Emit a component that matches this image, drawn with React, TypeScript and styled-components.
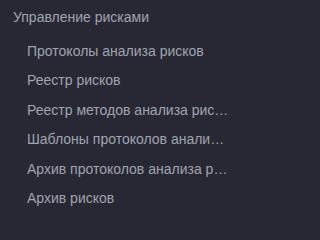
import React from 'react'
import styled, { createGlobalStyle } from 'styled-components'

const GlobalStyle = createGlobalStyle`
  html, body {
    margin: 0;
    padding: 0;
    background: #272833;
  }
`

const Panel = styled.nav`
  width: 244px;
  height: 221px;
  box-sizing: border-box;
  padding: 5px 15px 0 13px;
  background: #272833;
  font-family: 'Liberation Sans', Arial, sans-serif;
  overflow: hidden;
`

const GroupTitle = styled.div`
  height: 24px;
  line-height: 24px;
  font-size: 14px;
  color: #a0a3b1;
  white-space: nowrap;
`

const ItemList = styled.ul`
  list-style: none;
  margin: 8px 0 0;
  padding: 0 0 0 14px;
  display: flex;
  flex-direction: column;
`

const Item = styled.li`
  height: 29.4px;
  line-height: 29px;
  font-size: 14px;
  color: #a0a3b1;
  white-space: nowrap;
  overflow: hidden;
  text-overflow: ellipsis;
  cursor: pointer;
`

const items = [
  'Протоколы анализа рисков',
  'Реестр рисков',
  'Реестр методов анализа рисков',
  'Шаблоны протоколов анализа рисков',
  'Архив протоколов анализа рисков',
  'Архив рисков',
]

export default function App() {
  return (
    <>
      <GlobalStyle />
      <Panel>
        <GroupTitle>Управление рисками</GroupTitle>
        <ItemList>
          {items.map((label) => (
            <Item key={label}>{label}</Item>
          ))}
        </ItemList>
      </Panel>
    </>
  )
}
